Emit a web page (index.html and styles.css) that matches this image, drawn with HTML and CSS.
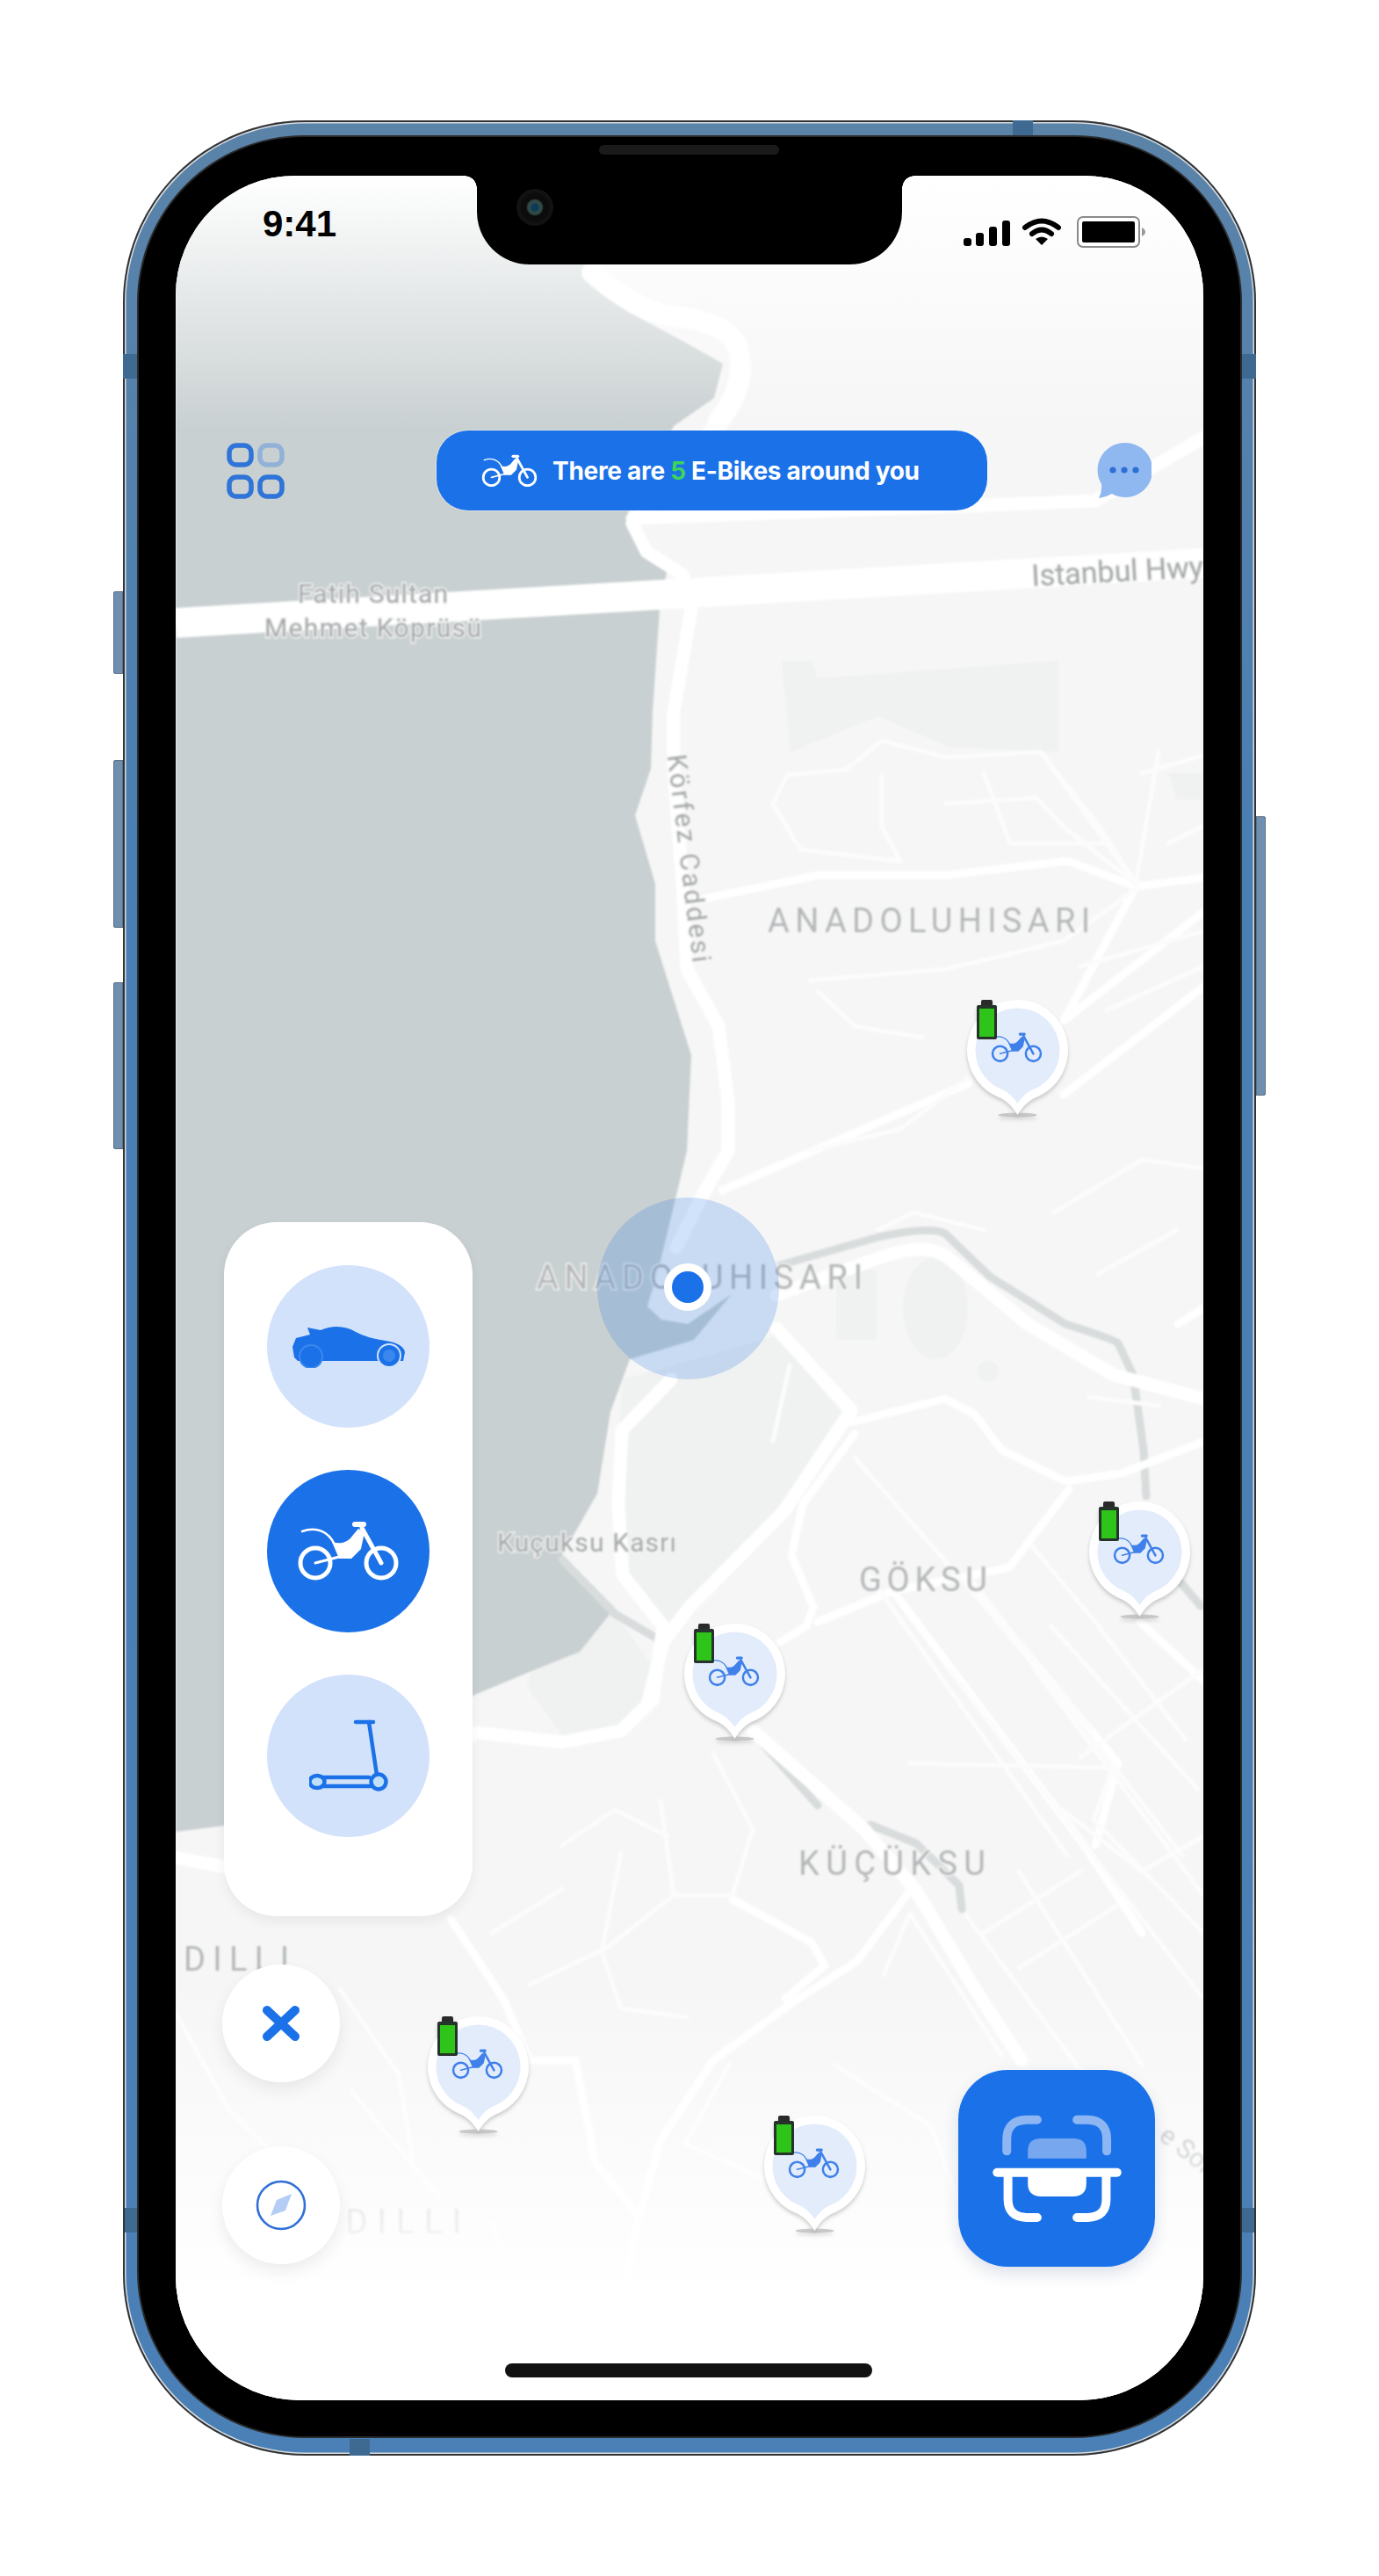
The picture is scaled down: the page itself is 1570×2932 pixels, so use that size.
FILE: index.html
```html
<!DOCTYPE html>
<html lang="en">
<head>
  <meta charset="UTF-8">
  <meta name="viewport" content="width=device-width, initial-scale=1.0">
  <title>E-Bikes map</title>
  <link rel="stylesheet" href="styles.css">
</head>
<body>
  <!-- shared icons -->
  <svg class="defs" aria-hidden="true">
    <symbol id="bike" viewBox="0 0 117 69">
      <g fill="none" stroke="currentColor" stroke-linecap="round">
        <circle cx="21" cy="48" r="17" stroke-width="5"/>
        <circle cx="96" cy="48" r="17" stroke-width="5"/>
        <path d="M21 48 L52 40" stroke-width="3"/>
        <path d="M6 12 C22 6 36 12 43 27" stroke-width="2.5"/>
        <path d="M74 8 L96 48" stroke-width="5"/>
        <path d="M66 4 H76" stroke-width="6"/>
      </g>
      <path d="M40 24 C50 27 58 25 64 16 L70 9 L77 13 L73 32 L62 43 L48 43 Z" fill="currentColor"/>
    </symbol>
    <symbol id="pin" viewBox="0 0 115 135">
      <ellipse cx="57.5" cy="131" rx="22" ry="2.5" fill="#b5b5b5" opacity=".7"/>
      <path d="M57.5 0 A57.5 57.5 0 0 1 80 110.4 C70 114 63 122 57.5 131 C52 122 45 114 35 110.4 A57.5 57.5 0 0 1 57.5 0Z" fill="#fff"/>
      <path d="M57.5 9.5 A48 48 0 0 1 76 101.8 C68 105 63 110 57.5 118 C52 110 47 105 39 101.8 A48 48 0 0 1 57.5 9.5Z" fill="#e3ecfb"/>
      <use href="#bike" x="27" y="37" width="59" height="35" color="#3f80ea"/>
      <rect x="16" y="0" width="13" height="8" rx="2" fill="#2a2a2a"/>
      <rect x="11" y="6" width="23" height="39" rx="2" fill="#26332a"/>
      <rect x="14" y="10" width="17" height="32" fill="#2fc41a"/>
    </symbol>
  </svg>

  <div class="phone">
    <span class="side-btn mute"></span>
    <span class="side-btn vol-up"></span>
    <span class="side-btn vol-down"></span>
    <span class="side-btn power"></span>
    <span class="band band-lt"></span>
    <span class="band band-rt"></span>
    <span class="band band-lb"></span>
    <span class="band band-rb"></span>
    <span class="band-h band-top"></span>
    <span class="band-h band-bottom"></span>

    <div class="bezel">
      <div class="speaker"></div>
      <div class="screen">

        <!-- map: page coordinates, that's why the viewBox starts at 200 -->
        <svg class="map" viewBox="200 200 1170 2532" preserveAspectRatio="none">
          <rect class="land" x="200" y="200" width="1170" height="2532"/>

          <path class="block" d="M709 1570 L884 1520 L960 1610 L890 1710 L790 1820 L755 1860 L709 1800 L700 1700 Z"/>
          <path class="block" d="M890 752 L925 752 L930 772 L1205 752 L1205 856 L1080 850 L1000 815 L900 856 Z"/>
          <rect class="block" x="952" y="1445" width="47" height="80" rx="6"/>
          <ellipse class="block" cx="1065" cy="1489" rx="37" ry="58"/>
          <circle class="block" cx="1125" cy="1561" r="12"/>
          <path class="block" d="M1330 880 H1370 V910 H1340 Z"/>
          <path class="block" d="M640 1790 L710 1850 L745 1900 L720 1960 L640 1975 L600 1920 Z"/>

          <path class="water" d="M200 200 H620 L674 310 L715 355 L777 388 L823 414 L813 453 L767 485 L715 583 L725 622 L759 651 L751 693 L743 810 L741 875 L723 928 L746 1006 L746 1071 L787 1201 L782 1310 L767 1373 L750 1443 L737 1487 L753 1502 L783 1507 L833 1473 L790 1525 L717 1547 L695 1607 L680 1700 L640 1770 L700 1830 L660 1880 L610 1900 L538 1930 L400 2010 L255 2078 L200 2085 Z"/>

          <g class="stream">
            <path d="M888 1440 L1000 1408 Q1060 1395 1076 1404 L1127 1453 L1213 1507 Q1270 1525 1273 1529 L1290 1565 L1302 1650 L1305 1703"/>
            <path d="M1345 1802 L1367 1828"/>
            <path d="M640 1775 L700 1837 L755 1869"/>
            <path d="M864 1980 L931 2055"/>
            <path d="M991 2077 L1043 2098 L1092 2146 L1095 2173"/>
          </g>

          <path class="road-bridge" d="M200 709 L1370 641"/>

          <path class="road-xl" d="M674 310 Q730 360 777 361 Q835 370 841 400 Q850 440 818 479"/>

          <g class="road-l">
            <path d="M818 479 L720 596 L736 628 L777 654 L787 693 L767 810 L767 875 L777 1006 L782 1103 L818 1168 L829 1253 L829 1310 L800 1360 L770 1420"/>
            <path d="M764 1570 L708 1628 L704 1712 L709 1793 L755 1851 L743 1935 L707 1970 L640 1983 L543 1972 L256 2125 L200 2114"/>
            <path d="M884 1474 L1000 1432 Q1055 1412 1080 1432 L1170 1507 L1268 1565 L1370 1592"/>
            <path d="M884 1512 L969 1605 L892 1721 L785 1829 L755 1869 L738 1936"/>
            <path d="M720 590 L1097 576 L1247 570 L1370 498"/>
            <path d="M857 1970 L984 2082 L1043 2152 L1110 2264 L1163 2345"/>
          </g>

          <g class="road-m">
            <path d="M969 1619 L1076 1592 L1110 1610 L1140 1650 L1213 1686 L1277 1677 L1370 1641"/>
            <path d="M973 1632 L914 1712 L901 1770 L926 1829 L918 1851 L888 1869"/>
            <path d="M931 1846 L1016 1811 L1149 1784 L1217 1695"/>
            <path d="M792 1025 L932 996 L1077 996 L1216 980 L1293 1009 L1370 999"/>
            <path d="M1293 1009 L1211 1162 L1370 1038"/>
            <path d="M1211 1246 L1370 1123"/>
            <path d="M1103 1233 L822 1355"/>
            <path d="M1341 1507 L1370 1489"/>
            <path d="M1036 2152 L976 2232 L901 2280 L812 2345 L752 2436 L722 2543 L707 2650"/>
            <path d="M1020 1815 L1234 2100 L1300 2200"/>
            <path d="M1110 1811 L1273 2007 L1247 2100"/>
            <path d="M1298 1846 L1370 1913"/>
            <path d="M513 2184 L573 2275 L603 2345 L655 2345 L678 2462 L722 2516"/>
            <path d="M834 2162 L924 2211 L939 2237 L894 2275"/>
          </g>

          <g class="road-s">
            <path d="M880 915 L896 882 L963 876 L1004 843 L1077 862 L1185 856 L1293 1006"/>
            <path d="M880 915 L911 967 L1025 980 L1004 941 L1004 882"/>
            <path d="M1077 915 L1180 908 L1211 941 L1293 1006"/>
            <path d="M1185 856 L1252 941 L1295 1009"/>
            <path d="M1319 856 L1293 1006"/>
            <path d="M922 1116 L1077 1103 L1211 1071 L1293 1012"/>
            <path d="M932 1129 L973 1168 L1051 1181"/>
            <path d="M1102 1227 L1025 1285 L921 1310"/>
            <path d="M899 1554 L880 1640"/>
            <path d="M973 1659 L1243 1967"/>
            <path d="M1081 1900 L1370 2275"/>
            <path d="M1178 1900 L1370 2157"/>
            <path d="M1036 2007 L1267 2012 L1245 2071 L1370 2200"/>
            <path d="M1006 2248 L1036 2178 L1140 2339"/>
            <path d="M603 2259 L692 2216 L767 2157 L834 2157 L857 2082 L812 1996"/>
            <path d="M707 2109 L685 2221 L707 2286 L782 2296"/>
            <path d="M752 2050 L767 2157"/>
            <path d="M387 2264 L454 2361 L470 2460"/>
            <path d="M950 2350 L1060 2420 L1090 2500"/>
            <path d="M830 2350 L780 2440 L870 2480"/>
            <path d="M1210 2060 L1300 2130 L1370 2090"/>
            <path d="M1120 2200 L1230 2130"/>
            <path d="M1160 2240 L1270 2170"/>
            <path d="M200 2291 L260 2400 L330 2470"/>
            <path d="M560 2530 L600 2640"/>
            <path d="M1175 1760 L1250 1850 L1350 1980"/>
            <path d="M1240 1590 L1320 1600"/>
            <path d="M990 1794 L1215 2112"/>
            <path d="M1103 1794 L1346 2112"/>
            <path d="M1196 1850 L1364 2037"/>
            <path d="M1230 2000 L1370 1900"/>
            <path d="M1100 2180 L1240 2370"/>
            <path d="M1160 2130 L1300 2350"/>
            <path d="M1120 880 L1150 960 L1260 960"/>
            <path d="M1300 880 L1370 860"/>
            <path d="M1330 960 L1370 940"/>
            <path d="M1230 1100 L1370 1060"/>
            <path d="M1260 1150 L1370 1100"/>
            <path d="M400 2380 L500 2500"/>
            <path d="M640 2100 L700 2060 L760 2090"/>
            <path d="M560 2200 L640 2150"/>
            <path d="M1000 1400 L1040 1380 L1120 1400"/>
            <path d="M1200 1380 L1300 1320 L1370 1330"/>
            <path d="M1250 1450 L1340 1400"/>
          </g>

          <text class="lbl" x="339" y="686" textLength="171">Fatih Sultan</text>
          <text class="lbl" x="301" y="725" textLength="247">Mehmet Köprüsü</text>
          <text class="lbl lbl-hwy" transform="translate(1175 667) rotate(-3)">Istanbul Hwy</text>
          <text class="lbl" transform="translate(760 860) rotate(83)" textLength="238">Körfez Caddesi</text>
          <text class="lbl-area" x="874" y="1061" textLength="367">ANADOLUHISARI</text>
          <text class="lbl-area" x="611" y="1467" textLength="371">ANADOLUHISARI</text>
          <text class="lbl" x="566" y="1766" textLength="204">Kuçuksu Kasrı</text>
          <text class="lbl-area" x="978" y="1811" textLength="146">GÖKSU</text>
          <text class="lbl-area" x="909" y="2134" textLength="213">KÜÇÜKSU</text>
          <text class="lbl-area" x="209" y="2243" textLength="120">DILLI</text>
          <text class="lbl-area" x="355" y="2542" textLength="170">NDILLI</text>
          <text class="lbl" transform="translate(1318 2434) rotate(38)">e Sok.</text>
        </svg>

        <div class="fade-top"></div>
        <div class="fade-bottom"></div>

        <div class="halo"></div>
        <div class="user-dot"></div>

        <svg class="marker marker-a"><use href="#pin"/></svg>
        <svg class="marker marker-c"><use href="#pin"/></svg>
        <svg class="marker marker-d"><use href="#pin"/></svg>
        <svg class="marker marker-e"><use href="#pin"/></svg>
        <svg class="marker marker-f"><use href="#pin"/></svg>

        <div class="notch">
          <span class="camera"></span>
        </div>

        <div class="hud">
          <!-- status bar -->
          <div class="status-bar">
            <span class="clock">9:41</span>
            <div class="status-icons">
              <svg class="ico-signal" viewBox="0 0 53 29">
                <rect x="0" y="20" width="9" height="9" rx="3"/>
                <rect x="14" y="14" width="9" height="15" rx="3"/>
                <rect x="29" y="7" width="9" height="22" rx="3"/>
                <rect x="44" y="0" width="9" height="29" rx="3"/>
              </svg>
              <svg class="ico-wifi" viewBox="0 0 44 31">
                <path d="M3 11 Q22 -4 41 11" fill="none" stroke="#000" stroke-width="6" stroke-linecap="round"/>
                <path d="M11 18 Q22 9 33 18" fill="none" stroke="#000" stroke-width="6" stroke-linecap="round"/>
                <path d="M22 31 L15 24 Q22 19 29 24 Z"/>
              </svg>
              <svg class="ico-battery" viewBox="0 0 78 36">
                <rect x="1" y="1" width="70" height="34" rx="6" fill="#fff" stroke="#8a8a8a" stroke-width="2"/>
                <rect x="6" y="6" width="60" height="24" rx="2"/>
                <path d="M74 13 Q78 15 78 18 Q78 21 74 23 Z" fill="#9a9a9a"/>
              </svg>
            </div>
          </div>

          <!-- top row -->
          <div class="top-bar">
            <svg class="ico-grid" viewBox="0 0 66 64">
              <g fill="none" stroke-width="5.5">
                <rect x="3" y="3" width="25" height="22" rx="8" stroke="#2f74d8"/>
                <rect x="38" y="3" width="25" height="22" rx="8" stroke="#92b1d8"/>
                <rect x="3" y="39" width="25" height="22" rx="8" stroke="#2f74d8"/>
                <rect x="38" y="39" width="25" height="22" rx="8" stroke="#2f74d8"/>
              </g>
            </svg>
            <div class="banner">
              <svg class="banner-bike"><use href="#bike"/></svg>
              <span>There are <b>5</b> E-Bikes around you</span>
            </div>
            <svg class="ico-chat" viewBox="0 0 62 63">
              <path d="M31 0 A31 31 0 1 1 17 58 Q10 62 2 63 Q6 55 5 47 A31 31 0 0 1 31 0Z" fill="#8fb8f0"/>
              <circle cx="18" cy="31" r="3.6" fill="#2e6fd6"/>
              <circle cx="31" cy="31" r="3.6" fill="#2e6fd6"/>
              <circle cx="44" cy="31" r="3.6" fill="#2e6fd6"/>
            </svg>
          </div>

          <!-- vehicle picker -->
          <div class="picker">
            <div class="vehicle">
              <svg class="ico-car" viewBox="0 0 128 48">
                <path d="M0 24 L4 14 L20 10 L17 2 L32 5 C46 -1 60 0 72 7 C82 12 92 15 106 17 C120 19 127 24 128 30 L126 40 L6 40 L2 36 Z" fill="#1b72e8"/>
                <circle cx="21" cy="35" r="14" fill="#3b87ee"/>
                <circle cx="110" cy="34" r="14" fill="#d2e2fb"/>
                <circle cx="21" cy="35" r="12" fill="#1b72e8"/>
                <circle cx="110" cy="34" r="12" fill="#1b72e8"/>
                <circle cx="110" cy="34" r="7" fill="#3b87ee"/>
              </svg>
            </div>
            <div class="vehicle is-active">
              <svg class="ico-bike"><use href="#bike"/></svg>
            </div>
            <div class="vehicle">
              <svg class="ico-scooter" viewBox="0 0 90 83">
                <g fill="none" stroke="#1b72e8" stroke-linecap="round">
                  <path d="M53 3 H73" stroke-width="4.5"/>
                  <path d="M68 3 L78 70" stroke-width="4.5"/>
                  <path d="M14 66 H68 M14 76 H70" stroke-width="4.5"/>
                  <ellipse cx="9" cy="71" rx="8.5" ry="7" stroke-width="4.5" fill="#bfe0fa"/>
                  <circle cx="79" cy="71" r="8.5" stroke-width="4.5" fill="#bfe0fa"/>
                </g>
              </svg>
            </div>
          </div>

          <!-- round buttons -->
          <div class="round-btn btn-close">
            <svg class="ico-close" viewBox="0 0 44 42">
              <path d="M6 6 L38 36 M38 6 L6 36" fill="none" stroke="#1b72e8" stroke-width="10" stroke-linecap="round"/>
            </svg>
          </div>
          <div class="round-btn btn-compass">
            <svg class="ico-compass" viewBox="0 0 58 58">
              <circle cx="29" cy="29" r="27" fill="none" stroke="#2f6fd6" stroke-width="2.6"/>
              <path d="M41 16 L34 35 L17 41 L24 23 Z" fill="#b4cdf4"/>
            </svg>
          </div>
        </div>

        <!-- scan button -->
        <div class="scan-btn">
          <svg class="ico-scan" viewBox="92 108 673 672">
            <g fill="none" stroke-width="30" stroke-linecap="round">
              <path d="M258 385 V345 Q258 280 325 278 H362" stroke="#8db6f3"/>
              <path d="M600 385 V345 Q600 280 535 278 H498" stroke="#8db6f3"/>
              <path d="M225 458 H635" stroke="#fff"/>
              <path d="M262 475 V550 Q262 610 325 612 H362" stroke="#fff"/>
              <path d="M598 475 V550 Q598 610 535 612 H498" stroke="#fff"/>
            </g>
            <path d="M330 410 V385 Q330 342 375 342 H485 Q530 342 530 385 V410 Z" fill="#77a8ef"/>
            <path d="M330 470 H530 V495 Q530 540 485 540 H375 Q330 540 330 495 Z" fill="#fff"/>
          </svg>
        </div>

        <div class="home-bar"></div>
      </div>
    </div>
  </div>
</body>
</html>
```

FILE: styles.css
```css
html, body {
  margin: 0;
  padding: 0;
  background: #fff;
}
body {
  min-height: 2932px;
  display: flex;
  align-items: center;
  justify-content: center;
  font-family: "Inter", "Liberation Sans", sans-serif;
}
.defs {
  position: absolute;
  width: 0;
  height: 0;
}

/* phone frame */
.phone {
  position: relative;
  box-sizing: border-box;
  width: 1290px;
  height: 2658px;
  padding: 19px 18px 22px;
  background: linear-gradient(#5b83a8, #4a7fb3 30%, #4a80b6);
  border-radius: 208px;
  box-shadow: inset 0 0 0 2px #333, inset 0 0 0 3.5px #d8dde2;
}
.bezel {
  position: relative;
  box-sizing: border-box;
  height: 100%;
  padding: 44px 42px 41px;
  background: #000;
  border-radius: 188px;
  box-shadow: 0 0 0 2px #2a2a2a;
}
.speaker {
  position: absolute;
  left: 524px;
  top: 9px;
  width: 205px;
  height: 11px;
  border-radius: 6px;
  background: #1a1a1a;
}
.side-btn {
  position: absolute;
  width: 11px;
  background: #6f8fb0;
  box-shadow: inset 0 0 0 1px #5c6f82;
}
.mute { left: -11px; top: 536px; height: 94px; border-radius: 3px 0 0 3px; }
.vol-up { left: -11px; top: 728px; height: 191px; border-radius: 3px 0 0 3px; }
.vol-down { left: -11px; top: 981px; height: 190px; border-radius: 3px 0 0 3px; }
.power { right: -11px; top: 792px; height: 318px; border-radius: 0 3px 3px 0; }
.band, .band-h {
  position: absolute;
  background: #3e6a92;
}
.band { width: 18px; height: 28px; }
.band-lt { left: 0; top: 266px; }
.band-rt { right: 0; top: 266px; }
.band-lb { left: 2px; top: 2376px; }
.band-rb { right: 2px; top: 2376px; }
.band-h { width: 23px; height: 19px; }
.band-top { left: 1013px; top: 0; }
.band-bottom { left: 258px; bottom: 0; }

/* screen */
.screen {
  position: relative;
  width: 1170px;
  height: 2532px;
  overflow: hidden;
  border-radius: 136px 136px 142px 142px;
  background: #fff;
}
.map {
  position: absolute;
  inset: 0;
  width: 100%;
  height: 100%;
  filter: blur(1.1px);
}
.land { fill: #f6f6f6; }
.block { fill: #f0f1f1; }
.water { fill: #c9d0d1; }
.stream path {
  fill: none;
  stroke: #d8dcdc;
  stroke-width: 9;
  stroke-linecap: round;
  stroke-linejoin: round;
}
.road-bridge { fill: none; stroke: #fff; stroke-width: 34; }
.road-xl {
  fill: none;
  stroke: #fff;
  stroke-width: 24;
  stroke-linecap: round;
  stroke-linejoin: round;
}
.road-l path, .road-m path, .road-s path {
  fill: none;
  stroke: #fff;
  stroke-linecap: round;
  stroke-linejoin: round;
}
.road-l path { stroke-width: 15; }
.road-m path { stroke-width: 9; }
.road-s path { stroke: #fcfcfc; stroke-width: 5; }
.lbl {
  font-family: "Roboto", "Liberation Sans", sans-serif;
  font-size: 30px;
  fill: #a5a8a9;
  paint-order: stroke;
  stroke: #f7f7f7;
  stroke-width: 3px;
}
.lbl-hwy { font-size: 34px; }
.lbl-area {
  font-family: "Roboto", "Liberation Sans", sans-serif;
  font-size: 38px;
  fill: #b4b7b8;
  paint-order: stroke;
  stroke: #f7f7f7;
  stroke-width: 3px;
}
.fade-top {
  position: absolute;
  left: 0;
  right: 0;
  top: 0;
  height: 290px;
  background: linear-gradient(#fff, rgba(255, 255, 255, 0));
}
.fade-bottom {
  position: absolute;
  left: 0;
  right: 0;
  bottom: 0;
  height: 480px;
  background: linear-gradient(rgba(255, 255, 255, 0), #fff 75%);
}

/* things sitting on the map */
.halo {
  position: absolute;
  left: 480px;
  top: 1163px;
  width: 207px;
  height: 207px;
  border-radius: 50%;
  background: rgba(27, 114, 232, .2);
}
.user-dot {
  position: absolute;
  left: 556px;
  top: 1238px;
  width: 36px;
  height: 36px;
  border: 9px solid #fff;
  border-radius: 50%;
  background: #1b72e8;
}
.marker {
  position: absolute;
  width: 115px;
  height: 135px;
  overflow: visible;
  filter: drop-shadow(0 3px 2px rgba(0, 0, 0, .18));
}
.marker-a { left: 901px; top: 938px; }
.marker-c { left: 1040px; top: 1509px; }
.marker-d { left: 579px; top: 1648px; }
.marker-e { left: 287px; top: 2095px; }
.marker-f { left: 670px; top: 2208px; }

/* notch */
.notch {
  position: absolute;
  left: 343px;
  top: 0;
  width: 484px;
  height: 101px;
  background: #000;
  border-radius: 0 0 60px 60px;
}
.notch::before, .notch::after {
  content: "";
  position: absolute;
  top: 0;
  width: 14px;
  height: 14px;
}
.notch::before {
  left: -14px;
  background: radial-gradient(circle at 0 100%, transparent 13.5px, #000 14px);
}
.notch::after {
  right: -14px;
  background: radial-gradient(circle at 100% 100%, transparent 13.5px, #000 14px);
}
.camera {
  position: absolute;
  left: 45px;
  top: 15px;
  width: 42px;
  height: 42px;
  border-radius: 50%;
  background: radial-gradient(circle at 50% 50%, #0d3a5c 0 4px, #2f4a44 5px 8px, #0c0c0c 10px 16px, #121212 17px);
}

/* hud */
.hud {
  position: absolute;
  inset: 0;
  display: flex;
  flex-direction: column;
}
.status-bar {
  display: flex;
  align-items: center;
  justify-content: space-between;
  height: 40px;
  margin-top: 35px;
  padding: 0 66px 0 99px;
}
.clock {
  font-family: "Liberation Sans", sans-serif;
  font-size: 42px;
  font-weight: bold;
  line-height: 1;
  color: #000;
}
.status-icons {
  display: flex;
  align-items: center;
  gap: 14px;
  margin-top: 21px;
}
.ico-signal { width: 53px; height: 29px; }
.ico-wifi { width: 44px; height: 31px; margin-top: -5px; }
.ico-battery { width: 78px; height: 36px; margin-left: 4px; margin-top: -3px; }

.top-bar {
  display: flex;
  align-items: center;
  height: 91px;
  margin-top: 215px;
  padding-left: 58px;
}
.ico-grid { width: 66px; height: 64px; flex: none; }
.banner {
  box-sizing: border-box;
  display: flex;
  align-items: center;
  gap: 17px;
  width: 627px;
  height: 91px;
  margin-left: 173px;
  padding-left: 51px;
  border-radius: 36px;
  background: #1b72e8;
  box-shadow: 0 0 0 1px rgba(255, 255, 255, .35);
  color: #fff;
  font-size: 28px;
  font-weight: 700;
  letter-spacing: -.3px;
  white-space: nowrap;
}
.banner b { color: #3ed45b; font-weight: 700; }
.banner-bike { width: 64px; height: 40px; flex: none; }
.ico-chat { width: 62px; height: 63px; margin-left: 125px; flex: none; }

.picker {
  box-sizing: border-box;
  display: flex;
  flex-direction: column;
  align-items: center;
  gap: 48px;
  width: 283px;
  height: 790px;
  margin: 810px 0 0 55px;
  padding-top: 49px;
  border-radius: 60px;
  background: #fff;
  box-shadow: 0 6px 14px rgba(0, 0, 0, .06);
}
.vehicle {
  display: flex;
  align-items: center;
  justify-content: center;
  width: 185px;
  height: 185px;
  flex: none;
  border-radius: 50%;
  background: #d2e2fb;
}
.vehicle.is-active { background: #1b72e8; color: #fff; }
.ico-car { width: 128px; height: 48px; }
.ico-bike { width: 117px; height: 69px; }
.ico-scooter { width: 90px; height: 83px; }

.round-btn {
  display: flex;
  align-items: center;
  justify-content: center;
  width: 134px;
  height: 134px;
  margin-left: 53px;
  border-radius: 50%;
  background: #fff;
  box-shadow: 0 8px 18px rgba(0, 0, 0, .07);
}
.btn-close { margin-top: 55px; }
.btn-compass { margin-top: 73px; }
.ico-close { width: 44px; height: 42px; }
.ico-compass { width: 58px; height: 58px; }

.scan-btn {
  position: absolute;
  right: 55px;
  bottom: 152px;
  width: 224px;
  height: 224px;
  border-radius: 56px;
  background: #1b72e8;
  box-shadow: 0 8px 18px rgba(27, 60, 120, .14);
}
.ico-scan { display: block; width: 100%; height: 100%; }

.home-bar {
  position: absolute;
  left: 375px;
  bottom: 26px;
  width: 418px;
  height: 16px;
  border-radius: 8px;
  background: #111;
}
```
